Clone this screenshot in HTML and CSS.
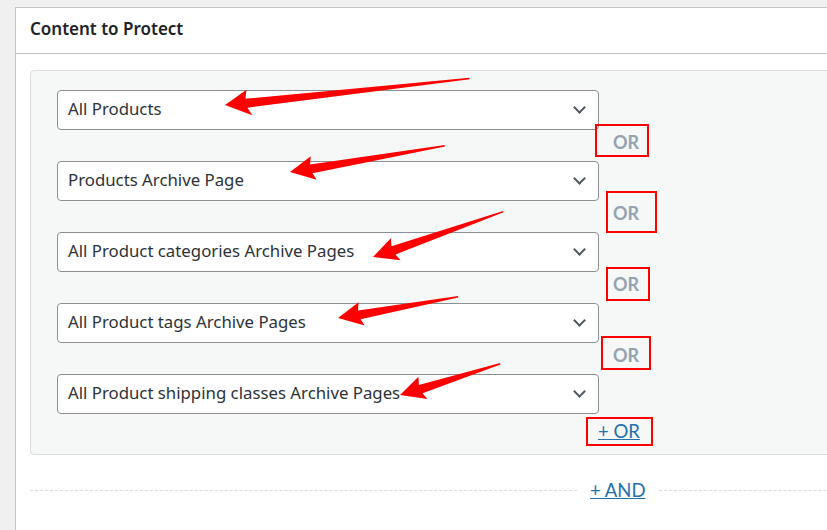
FILE: index.html
```html
<!DOCTYPE html>
<html lang="en">
<head>
    <meta charset="UTF-8">
    <meta name="viewport" content="width=device-width, initial-scale=1.0">
    <title>Content to Protect</title>
    <link rel="stylesheet" href="styles.css">
</head>
<body>

    <div class="panel">
        <header class="panel-header">
            <h2>Content to Protect</h2>
        </header>

        <div class="panel-body">
            <div class="rule-group">
                <div class="rule">
                    <div class="select">All Products<span class="chevron"></span></div>
                    <div class="or-label">OR</div>
                </div>
                <div class="rule">
                    <div class="select">Products Archive Page<span class="chevron"></span></div>
                    <div class="or-label">OR</div>
                </div>
                <div class="rule">
                    <div class="select">All Product categories Archive Pages<span class="chevron"></span></div>
                    <div class="or-label">OR</div>
                </div>
                <div class="rule">
                    <div class="select">All Product tags Archive Pages<span class="chevron"></span></div>
                    <div class="or-label">OR</div>
                </div>
                <div class="rule">
                    <div class="select">All Product shipping classes Archive Pages<span class="chevron"></span></div>
                    <div class="or-label"><a href="#" class="add-link">+ OR</a></div>
                </div>
            </div>

            <div class="and-row">
                <span class="dash dash-left"></span>
                <a href="#" class="add-link and-link">+ AND</a>
                <span class="dash"></span>
            </div>
        </div>
    </div>

    <!-- annotation layer: red arrows and boxes drawn on top of the screenshot -->
    <svg class="annotations" width="827" height="530" viewBox="0 0 827 530">
        <g fill="#ff0000">
            <g transform="translate(225 105) rotate(-6.1)"><polygon points="0,0 23,-13 21,-4 246,-1 246,0.5 22,5 26,13" /></g>
            <g transform="translate(290 172) rotate(-9.5)"><polygon points="0,0 23,-12 21,-4 157,-1 157,0.5 22,5 25,12" /></g>
            <g transform="translate(373 257) rotate(-19.1)"><polygon points="0,0 23,-12 21,-4 138,-1 138,0.5 22,5 25,12" /></g>
            <g transform="translate(338 318) rotate(-9.9)"><polygon points="0,0 23,-12 21,-4 122,-1 122,0.5 22,5 25,12" /></g>
            <g transform="translate(400 395) rotate(-17.2)"><polygon points="0,0 23,-12 21,-4 105,-1 105,0.5 22,5 25,12" /></g>
        </g>
        <g fill="none" stroke="#ff0000" stroke-width="2">
            <rect x="596" y="125" width="52" height="31" />
            <rect x="607" y="192" width="49" height="40" />
            <rect x="607" y="268" width="42" height="32" />
            <rect x="602" y="337" width="48" height="32" />
            <rect x="587" y="418" width="65" height="27" />
        </g>
    </svg>

</body>
</html>
```

FILE: styles.css
```css
/* Reset & page */
* {
    box-sizing: border-box;
    margin: 0;
    padding: 0;
}

body {
    font-family: "Noto Sans", "Open Sans", sans-serif;
    background-color: #f0f0f1;
    color: #2c3338;
    overflow: hidden;
    width: 827px;
    height: 530px;
    position: relative;
}

/* Panel */
.panel {
    width: 1200px;
    margin: 7px 0 0 15px;
    background-color: #ffffff;
    border: 1px solid #c3c4c7;
    min-height: 600px;
}

.panel-header {
    height: 46px;
    padding: 0 14px 5px;
    border-bottom: 1px solid #c3c4c7;
    display: flex;
    align-items: center;
}

.panel-header h2 {
    font-size: 17px;
    font-weight: 600;
    color: #1d2327;
}

.panel-body {
    padding: 16px 14px;
}

/* Rule group box */
.rule-group {
    background-color: #f6f7f7;
    border: 1px solid #dcdcde;
    border-radius: 4px;
    padding: 19px 26px 9px;
}

.select {
    width: 542px;
    height: 40px;
    background-color: #ffffff;
    border: 1px solid #8c8f94;
    border-radius: 4px;
    padding: 0 10px 3px;
    display: flex;
    align-items: center;
    justify-content: space-between;
    font-size: 16.8px;
    color: #2c3338;
}

.chevron {
    width: 9px;
    height: 9px;
    border-right: 2px solid #50575e;
    border-bottom: 2px solid #50575e;
    transform: rotate(45deg);
    margin: -2px 4px 0 0;
}

.or-label {
    height: 31px;
    padding-left: 556px;
    font-family: Lato, "Noto Sans", sans-serif;
    font-size: 18px;
    font-weight: 700;
    line-height: 24px;
    color: #94a3b2;
}

.rule:last-child .or-label {
    height: 31px;
    padding-left: 541px;
    padding-top: 5px;
}

/* Links */
.add-link {
    font-family: Lato, "Noto Sans", sans-serif;
    font-size: 18.5px;
    font-weight: 400;
    color: #2271b1;
    text-decoration: underline;
}

.and-row {
    display: flex;
    align-items: center;
    gap: 13px;
    margin-top: 24px;
}

.dash {
    flex: 1;
    border-top: 1px dashed #dcdcde;
}

.dash-left {
    flex: 0 0 547px;
}

/* Annotations overlay */
.annotations {
    position: absolute;
    top: 0;
    left: 0;
    pointer-events: none;
}
```
